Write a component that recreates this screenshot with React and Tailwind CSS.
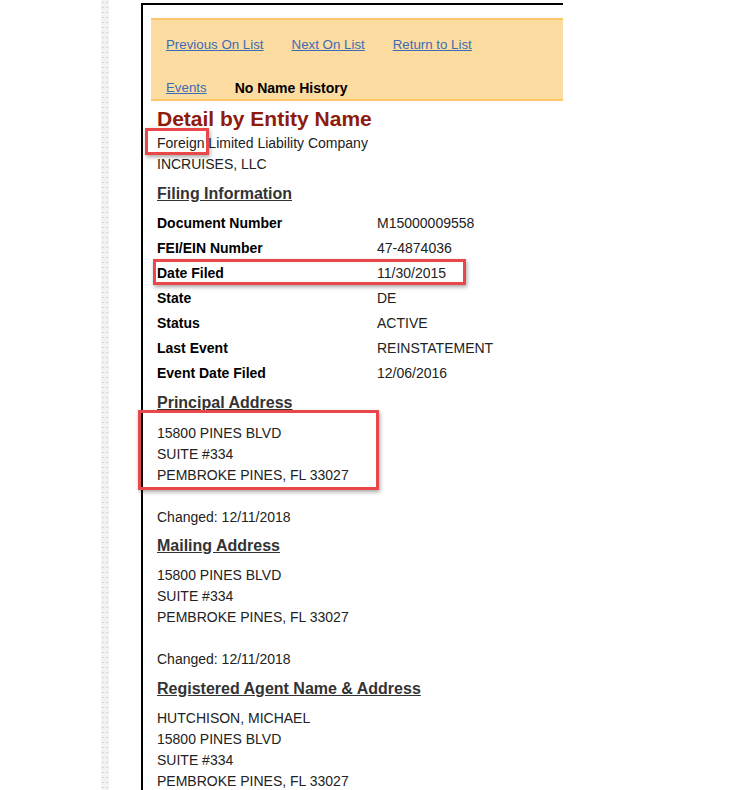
import React from 'react'

const filing = [
  ['Document Number', 'M15000009558'],
  ['FEI/EIN Number', '47-4874036'],
  ['Date Filed', '11/30/2015'],
  ['State', 'DE'],
  ['Status', 'ACTIVE'],
  ['Last Event', 'REINSTATEMENT'],
  ['Event Date Filed', '12/06/2016'],
]

function Heading({ children, className = '' }) {
  return (
    <div className={`h-[24px] leading-[24px] text-[16px] font-bold underline text-[#333] ${className}`}>
      {children}
    </div>
  )
}

function Lines({ lines, className = '' }) {
  return (
    <div className={`leading-[21px] ${className}`}>
      {lines.map((l, i) => (
        <div key={i} className="h-[21px]">{l}</div>
      ))}
    </div>
  )
}

// red callout boxes drawn over the screenshot
function Callout({ className }) {
  return (
    <div className={`absolute border-[3px] border-[#e9474a] shadow-[1px_2px_4px_rgba(0,0,0,0.35)] pointer-events-none ${className}`} />
  )
}

export default function App() {
  return (
    <div className="relative w-[739px] h-[790px] overflow-hidden bg-white text-[14px] text-[#222]" style={{ fontFamily: '"Liberation Sans", Arial, sans-serif' }}>
      <div className="flex h-full">
        <div className="w-[101px] shrink-0" />
        <div className="w-[8px] shrink-0 bg-[#f3f3f3] bg-[radial-gradient(circle,#d9d2d4_0.8px,transparent_1px)] bg-[length:4px_5px]" />
        <div className="w-[32px] shrink-0" />
        <div className="mt-[3px] w-[422px] shrink-0 border-l-2 border-t-2 border-black overflow-hidden">
          <div className="ml-[8px] mt-[13px] border-t-2 border-b-2 border-[#fcc66a] bg-[#fddca2] pl-[15px] pt-[15px] pb-[1px] text-[13.3px]">
            <div className="flex h-[20px] items-center gap-[28px]">
              <a href="#" className="text-[#3a6cb4] underline">Previous On List</a>
              <a href="#" className="text-[#3a6cb4] underline">Next On List</a>
              <a href="#" className="text-[#3a6cb4] underline">Return to List</a>
            </div>
            <div className="mt-[23px] flex h-[20px] items-center gap-[28px]">
              <a href="#" className="text-[#3a6cb4] underline">Events</a>
              <span className="text-[14px] font-bold text-black">No Name History</span>
            </div>
          </div>

          <div className="pl-[14px]">
            <h1 className="mt-[4px] h-[28px] leading-[27px] text-[21px] font-bold text-[#8e1b0c]">Detail by Entity Name</h1>
            <Lines lines={['Foreign Limited Liability Company', 'INCRUISES, LLC']} />

            <Heading className="mt-[6.5px]">Filing Information</Heading>
            <div className="mt-[5.5px]">
              {filing.map(([k, v]) => (
                <div key={k} className="flex h-[25px] items-center">
                  <span className="w-[220px] font-bold text-black">{k}</span>
                  <span>{v}</span>
                </div>
              ))}
            </div>

            <Heading className="mt-[4.5px]">Principal Address</Heading>
            <Lines className="mt-[8.5px]" lines={['15800 PINES BLVD', 'SUITE #334', 'PEMBROKE PINES, FL 33027', '', 'Changed: 12/11/2018']} />

            <Heading className="mt-[5.5px]">Mailing Address</Heading>
            <Lines className="mt-[7.5px]" lines={['15800 PINES BLVD', 'SUITE #334', 'PEMBROKE PINES, FL 33027', '', 'Changed: 12/11/2018']} />

            <Heading className="mt-[6.5px]">Registered Agent Name &amp; Address</Heading>
            <Lines className="mt-[7.5px]" lines={['HUTCHISON, MICHAEL', '15800 PINES BLVD', 'SUITE #334', 'PEMBROKE PINES, FL 33027']} />
          </div>
        </div>
      </div>

      <Callout className="left-[145px] top-[128px] w-[64px] h-[27px]" />
      <Callout className="left-[153px] top-[259px] w-[313px] h-[26px]" />
      <Callout className="left-[138px] top-[410px] w-[241px] h-[80px]" />
    </div>
  )
}
